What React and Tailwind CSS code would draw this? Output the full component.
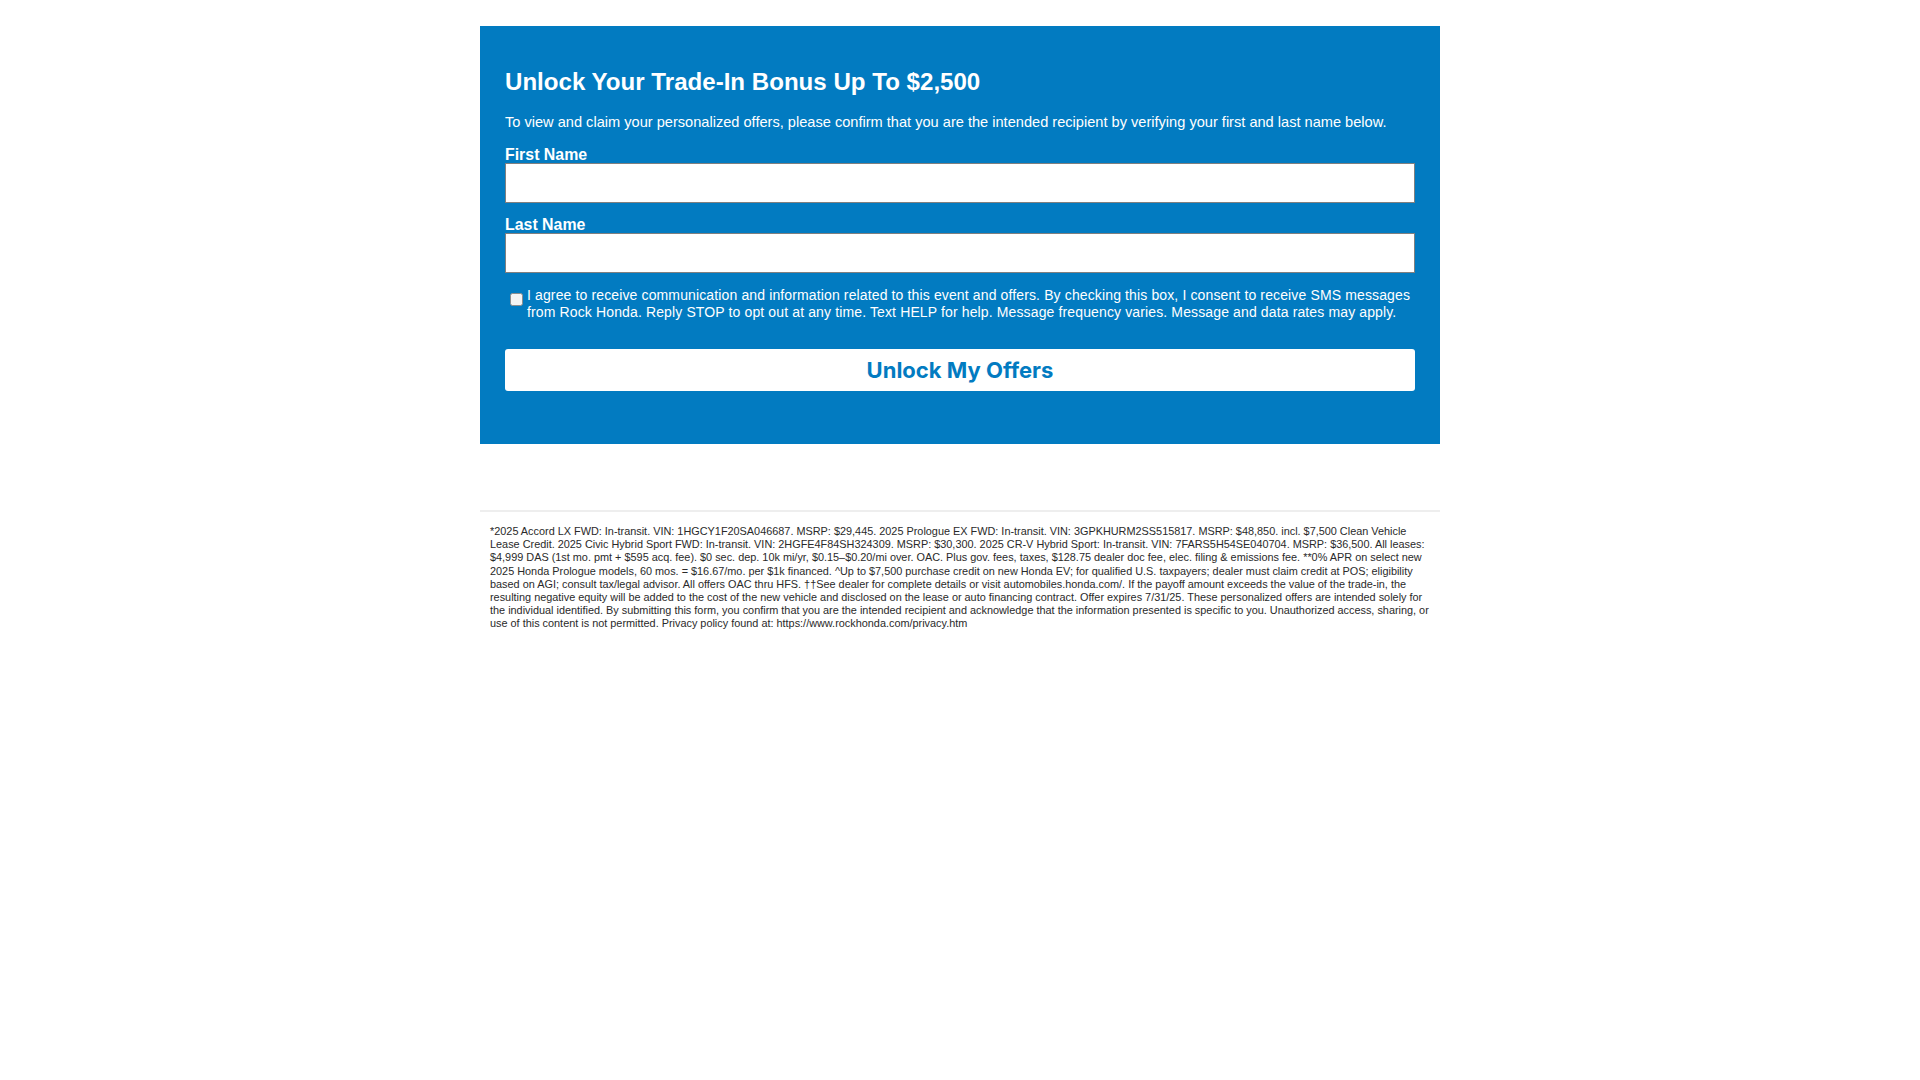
import React from 'react'

const labelClass = "block text-[15.9px] leading-[17px] font-bold text-white"
const inputClass = "block w-full h-10 bg-white border border-[#808080]"

const App = () => {
  return (
    <div className="min-h-screen bg-white font-['Liberation_Sans',Arial,sans-serif]">
      <div className="w-[960px] mx-auto pt-[26px]">
        <form className="bg-[#027bc1] px-[25px] pt-[40px] pb-[53px]">
          <h1 className="text-[24.1px] leading-[32px] font-bold text-white">Unlock Your Trade-In Bonus Up To $2,500</h1>
          <p className="mt-[14px] text-[14.6px] leading-[20px] text-white">To view and claim your personalized offers, please confirm that you are the intended recipient by verifying your first and last name below.</p>

          <label className={labelClass + " mt-[14px]"}>First Name</label>
          <input type="text" className={inputClass} />

          <label className={labelClass + " mt-[13px]"}>Last Name</label>
          <input type="text" className={inputClass} />

          <div className="flex items-start mt-[14px] pl-[5px]">
            <input type="checkbox" className="appearance-none w-[13px] h-[13px] mt-[6px] shrink-0 bg-[#f4f4f4] border border-[#8d8d8d] rounded-[2.5px]" />
            <span className="ml-[4px] text-[14px] leading-[17px] tracking-[0.13px] text-white">I agree to receive communication and information related to this event and offers. By checking this box, I consent to receive SMS messages from Rock Honda. Reply STOP to opt out at any time. Text HELP for help. Message frequency varies. Message and data rates may apply.</span>
          </div>

          <button type="button" className="block w-full h-[42px] mt-[28px] bg-white rounded-[3px] text-[#027bc1] text-[22px] font-bold font-['Inter',sans-serif]">Unlock My Offers</button>
        </form>

        <div className="mt-[66px] border-t-2 border-[#eeeeee] px-[10px] pt-[13px]">
          <p className="text-[10.88px] leading-[13.2px] text-[#2a2a2a]">*2025 Accord LX FWD: In-transit. VIN: 1HGCY1F20SA046687. MSRP: $29,445. 2025 Prologue EX FWD: In-transit. VIN: 3GPKHURM2SS515817. MSRP: $48,850. incl. $7,500 Clean Vehicle Lease Credit. 2025 Civic Hybrid Sport FWD: In-transit. VIN: 2HGFE4F84SH324309. MSRP: $30,300. 2025 CR-V Hybrid Sport: In-transit. VIN: 7FARS5H54SE040704. MSRP: $36,500. All leases: $4,999 DAS (1st mo. pmt + $595 acq. fee). $0 sec. dep. 10k mi/yr, $0.15–$0.20/mi over. OAC. Plus gov. fees, taxes, $128.75 dealer doc fee, elec. filing &amp; emissions fee. **0% APR on select new 2025 Honda Prologue models, 60 mos. = $16.67/mo. per $1k financed. ^Up to $7,500 purchase credit on new Honda EV; for qualified U.S. taxpayers; dealer must claim credit at POS; eligibility based on AGI; consult tax/legal advisor. All offers OAC thru HFS. ††See dealer for complete details or visit automobiles.honda.com/. If the payoff amount exceeds the value of the trade-in, the resulting negative equity will be added to the cost of the new vehicle and disclosed on the lease or auto financing contract. Offer expires 7/31/25. These personalized offers are intended solely for the individual identified. By submitting this form, you confirm that you are the intended recipient and acknowledge that the information presented is specific to you. Unauthorized access, sharing, or use of this content is not permitted. Privacy policy found at: https://www.rockhonda.com/privacy.htm</p>
        </div>
      </div>
    </div>
  )
}

export default App
